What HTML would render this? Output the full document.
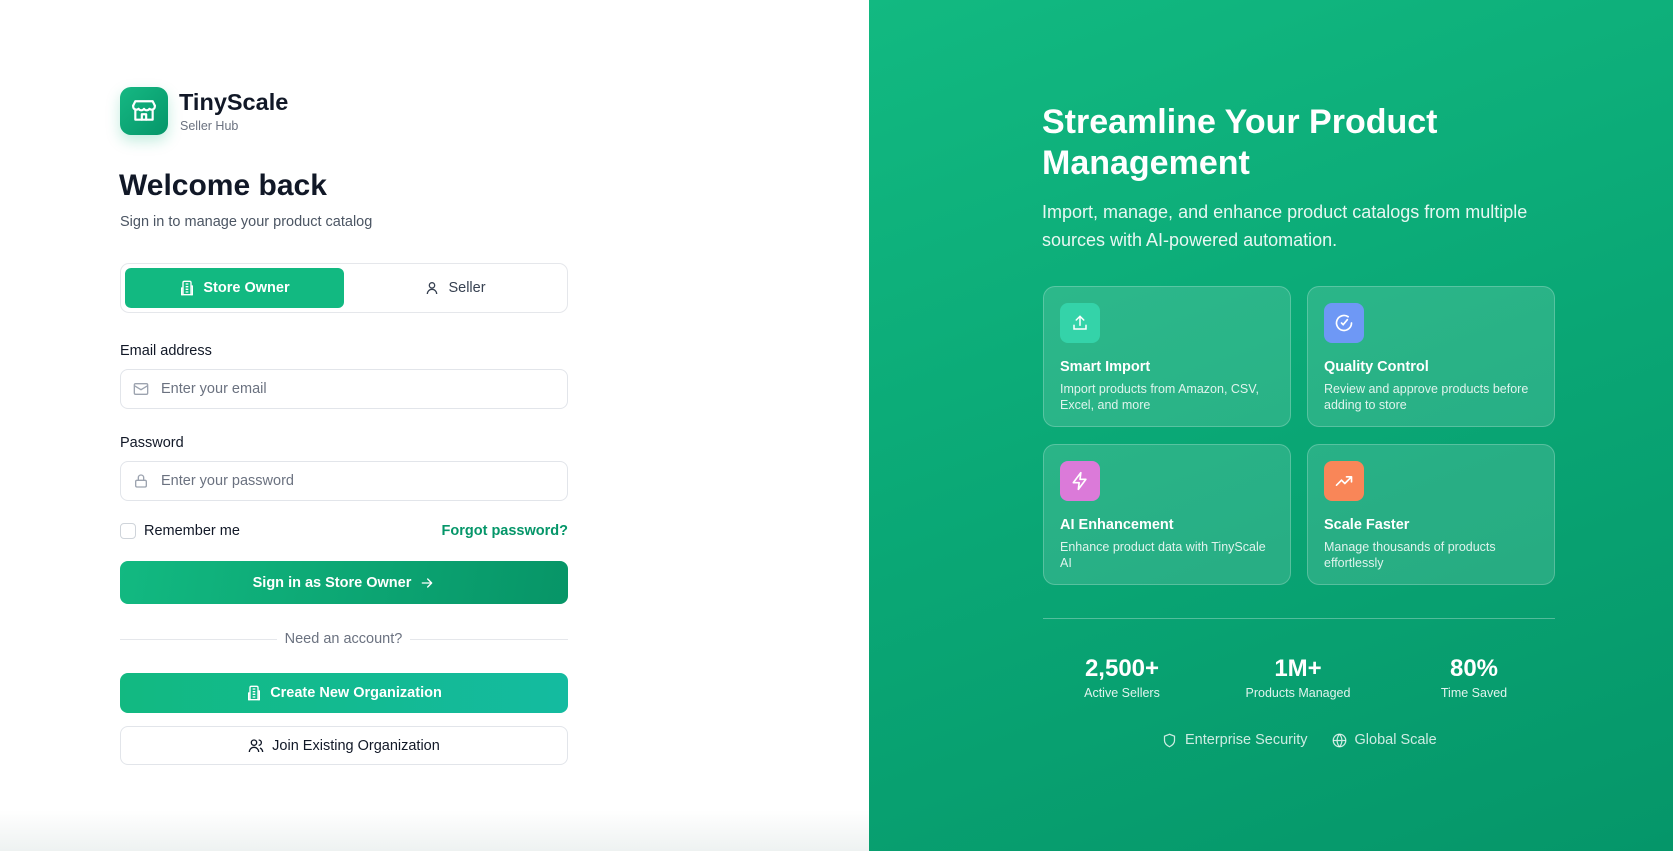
<!DOCTYPE html>
<html><head><meta charset="utf-8"><style>
*{box-sizing:border-box;margin:0;padding:0}
body{width:1673px;height:851px;overflow:hidden;font-family:"Liberation Sans",sans-serif;position:relative;background:#fff}
.left{position:absolute;left:0;top:0;width:869px;height:851px;background:linear-gradient(#fff 0,#fff 810px,#eef2f1 851px)}
.right{position:absolute;left:869px;top:0;width:804px;height:851px;background:linear-gradient(160deg,#12b981 0%,#0aa775 50%,#059669 100%)}
.abs{position:absolute}
.logo{left:120px;top:87px;width:48px;height:48px;border-radius:11px;background:linear-gradient(135deg,#16b883,#059669);box-shadow:0 6px 14px rgba(16,185,129,.25);display:flex;align-items:center;justify-content:center}
.btn{position:absolute;left:120px;width:448px;border-radius:8px;display:flex;align-items:center;justify-content:center;font-size:14.5px;font-weight:bold;gap:8px}
.input{position:absolute;left:120px;width:448px;height:40px;border:1px solid #e2e5ea;border-radius:8px;display:flex;align-items:center;padding-left:12px;gap:12px;color:#6b7280;font-size:14.5px}
.label{position:absolute;left:120px;font-size:14.5px;color:#111827}
.card{position:absolute;width:248px;height:141px;border-radius:12px;background:rgba(255,255,255,.13);border:1px solid rgba(255,255,255,.22);padding:16px}
.ib{width:40px;height:40px;border-radius:8px;display:flex;align-items:center;justify-content:center}
.card h3{color:#fff;font-size:14.5px;margin-top:16px;font-weight:bold}
.card p{color:rgba(255,255,255,.85);font-size:12.5px;line-height:16px;margin-top:6px}
.stat{position:absolute;top:654px;width:200px;text-align:center;color:#fff}
.stat b{display:block;font-size:24px;line-height:30px}
.stat span{font-size:12.5px;color:rgba(255,255,255,.88)}
</style></head><body>
<div class="left"></div>
<div class="right"></div>
<div class="abs logo"><svg width="26" height="26" viewBox="0 0 24 24" fill="none" stroke="#fff" stroke-width="2" stroke-linecap="round" stroke-linejoin="round"><path d="M2 7l2-4h16l2 4"/><path d="M2 7v1a3 3 0 0 0 5 2 3 3 0 0 0 5 0 3 3 0 0 0 5 0 3 3 0 0 0 5-2V7"/><path d="M4 11v9h16v-9"/><path d="M10 20v-5h4v5"/></svg></div>
<div class="abs" style="left:179px;top:89px;font-size:23.5px;font-weight:bold;color:#111827">TinyScale</div>
<div class="abs" style="left:180px;top:119px;font-size:12.5px;color:#6b7280">Seller Hub</div>
<div class="abs" style="left:119px;top:169px;font-size:30px;font-weight:bold;color:#111827">Welcome back</div>
<div class="abs" style="left:120px;top:214px;font-size:14.5px;color:#4b5563">Sign in to manage your product catalog</div>
<div class="abs" style="left:120px;top:263px;width:448px;height:50px;border:1px solid #e5e7eb;border-radius:9px"></div>
<div class="btn" style="left:125px;width:219px;top:268px;height:40px;background:#12b981;color:#fff;border-radius:6px">
<svg width="16" height="16" viewBox="0 0 24 24" fill="none" stroke="#fff" stroke-width="2"><path d="M6 22V4a2 2 0 0 1 2-2h8a2 2 0 0 1 2 2v18z"/><path d="M6 12H4v10h2M18 9h2v13h-2M10 6h4M10 10h4M10 14h4M10 18h4"/></svg>Store Owner</div>
<div class="btn" style="left:346px;width:218px;top:268px;height:40px;color:#374151;font-weight:normal">
<svg width="16" height="16" viewBox="0 0 24 24" fill="none" stroke="#374151" stroke-width="2"><circle cx="12" cy="8" r="4"/><path d="M5 21a7 7 0 0 1 14 0"/></svg>Seller</div>
<div class="label" style="top:343px">Email address</div>
<div class="input" style="top:369px"><svg width="16" height="16" viewBox="0 0 24 24" fill="none" stroke="#9ca3af" stroke-width="2"><rect x="2" y="4" width="20" height="16" rx="2"/><path d="M2 7l10 6 10-6"/></svg>Enter your email</div>
<div class="label" style="top:435px">Password</div>
<div class="input" style="top:461px"><svg width="16" height="16" viewBox="0 0 24 24" fill="none" stroke="#9ca3af" stroke-width="2"><rect x="4" y="11" width="16" height="10" rx="2"/><path d="M8 11V7a4 4 0 0 1 8 0v4"/></svg>Enter your password</div>
<div class="abs" style="left:120px;top:523px;width:16px;height:16px;border:1px solid #cfd4da;border-radius:4px"></div>
<div class="abs" style="left:144px;top:523px;font-size:14.5px;color:#111827">Remember me</div>
<div class="abs" style="right:1105px;top:523px;font-size:14.5px;color:#059669;font-weight:bold;white-space:nowrap">Forgot password?</div>
<div class="btn" style="top:561px;height:43px;background:linear-gradient(100deg,#12b981,#079567);color:#fff">Sign in as Store Owner <svg width="16" height="16" viewBox="0 0 24 24" fill="none" stroke="#fff" stroke-width="2" stroke-linecap="round" stroke-linejoin="round"><path d="M5 12h14M13 6l6 6-6 6"/></svg></div>
<div class="abs" style="left:120px;top:639px;width:157px;height:1px;background:#e5e7eb"></div>
<div class="abs" style="left:410px;top:639px;width:158px;height:1px;background:#e5e7eb"></div>
<div class="abs" style="left:277px;top:631px;width:133px;text-align:center;font-size:14.5px;color:#6b7280">Need an account?</div>
<div class="btn" style="top:673px;height:40px;background:linear-gradient(90deg,#12b981,#14bba0);color:#fff">
<svg width="16" height="16" viewBox="0 0 24 24" fill="none" stroke="#fff" stroke-width="2"><path d="M6 22V4a2 2 0 0 1 2-2h8a2 2 0 0 1 2 2v18z"/><path d="M6 12H4v10h2M18 9h2v13h-2M10 6h4M10 10h4M10 14h4M10 18h4"/></svg>Create New Organization</div>
<div class="btn" style="top:726px;height:39px;border:1px solid #e2e5ea;color:#111827;font-weight:normal">
<svg width="16" height="16" viewBox="0 0 24 24" fill="none" stroke="#111827" stroke-width="2"><circle cx="9" cy="7" r="4"/><path d="M2 21a7 7 0 0 1 14 0M16 3a4 4 0 0 1 0 8M22 21a7 7 0 0 0-4-6"/></svg>Join Existing Organization</div>

<div class="abs" style="left:1042px;top:102px;font-size:34px;font-weight:bold;color:#fff;line-height:41px;width:500px">Streamline Your Product Management</div>
<div class="abs" style="left:1042px;top:198px;font-size:18px;color:rgba(255,255,255,.9);line-height:28px;width:520px">Import, manage, and enhance product catalogs from multiple sources with AI-powered automation.</div>

<div class="card" style="left:1043px;top:286px"><div class="ib" style="background:#34d3a9"><svg width="18" height="18" viewBox="0 0 24 24" fill="none" stroke="#fff" stroke-width="2" stroke-linecap="round"><path d="M12 15V3M7 8l5-5 5 5M4 15v5h16v-5"/></svg></div><h3>Smart Import</h3><p>Import products from Amazon, CSV, Excel, and more</p></div>
<div class="card" style="left:1307px;top:286px"><div class="ib" style="background:#6e98f5"><svg width="20" height="20" viewBox="0 0 24 24" fill="none" stroke="#fff" stroke-width="2" stroke-linecap="round"><path d="M21 12a9 9 0 1 1-4-7.5"/><path d="M9 12l2 2 5-6"/></svg></div><h3>Quality Control</h3><p>Review and approve products before adding to store</p></div>
<div class="card" style="left:1043px;top:444px"><div class="ib" style="background:#db7ad9"><svg width="20" height="20" viewBox="0 0 24 24" fill="none" stroke="#fff" stroke-width="2" stroke-linejoin="round"><path d="M13 2L4 14h7l-1 8 9-12h-7z"/></svg></div><h3>AI Enhancement</h3><p>Enhance product data with TinyScale AI</p></div>
<div class="card" style="left:1307px;top:444px"><div class="ib" style="background:#f98658"><svg width="20" height="20" viewBox="0 0 24 24" fill="none" stroke="#fff" stroke-width="2" stroke-linecap="round" stroke-linejoin="round"><path d="M3 17l6-6 4 4 8-8M15 7h6v6"/></svg></div><h3>Scale Faster</h3><p>Manage thousands of products effortlessly</p></div>

<div class="abs" style="left:1043px;top:618px;width:512px;height:1px;background:rgba(255,255,255,.3)"></div>
<div class="stat" style="left:1022px"><b>2,500+</b><span>Active Sellers</span></div>
<div class="stat" style="left:1198px"><b>1M+</b><span>Products Managed</span></div>
<div class="stat" style="left:1374px"><b>80%</b><span>Time Saved</span></div>
<div class="abs" style="left:1162px;top:732px;font-size:14.5px;color:rgba(255,255,255,.8);display:flex;align-items:center;gap:8px;white-space:nowrap">
<svg width="15" height="15" viewBox="0 0 24 24" fill="none" stroke="rgba(255,255,255,.8)" stroke-width="2"><path d="M12 2l8 3v7c0 5-4 8-8 10-4-2-8-5-8-10V5z"/></svg>Enterprise Security
<svg style="margin-left:16px" width="15" height="15" viewBox="0 0 24 24" fill="none" stroke="rgba(255,255,255,.8)" stroke-width="2"><circle cx="12" cy="12" r="10"/><path d="M2 12h20M12 2a15 15 0 0 1 0 20M12 2a15 15 0 0 0 0 20"/></svg>Global Scale</div>
</body></html>
